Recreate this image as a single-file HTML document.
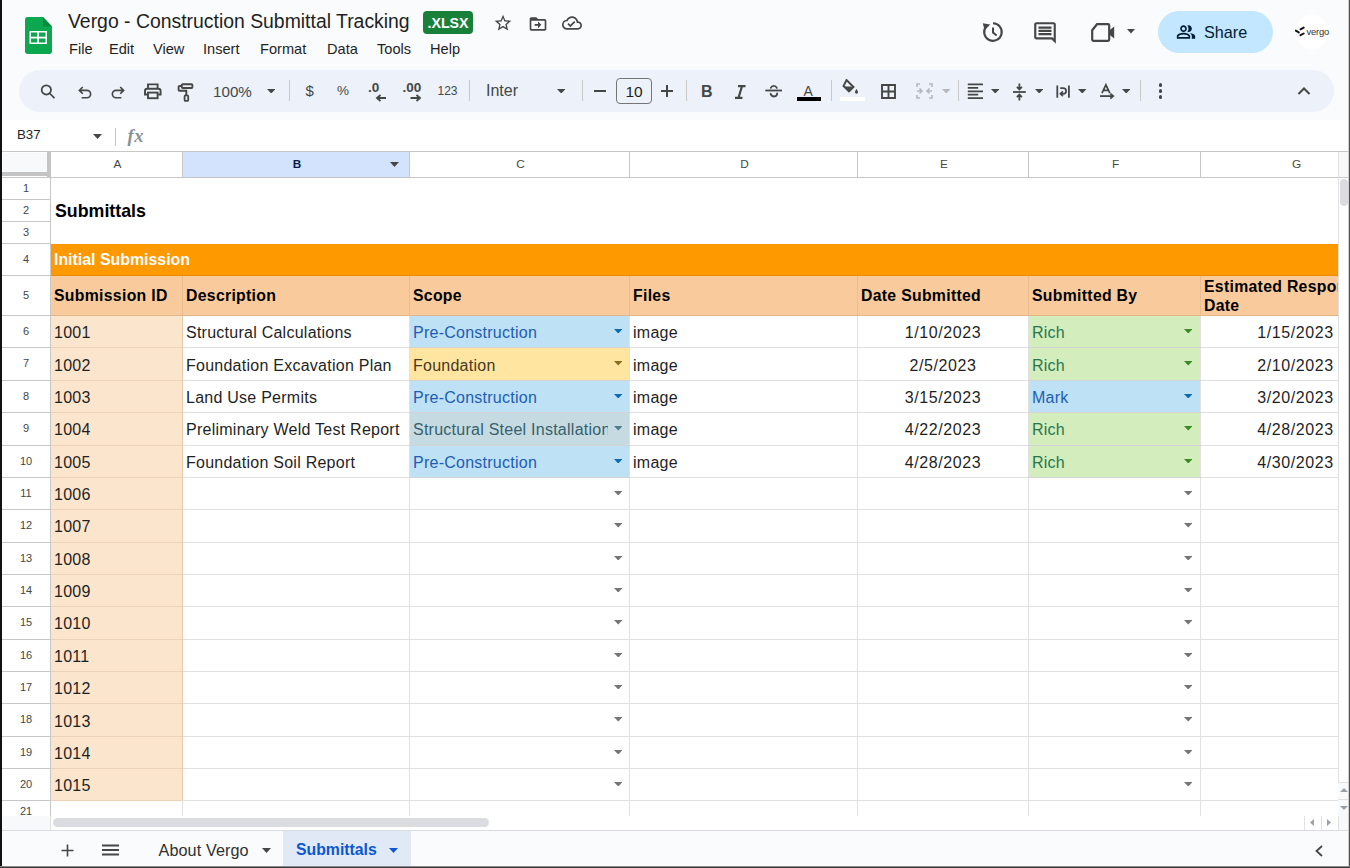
<!DOCTYPE html><html><head><meta charset="utf-8"><style>
html,body{margin:0;padding:0;} body{width:1350px;height:868px;position:relative;overflow:hidden;background:#f9fbfd;font-family:"Liberation Sans", sans-serif;}
div{box-sizing:border-box;}
</style></head><body>
<svg style="position:absolute;left:25px;top:17px" width="27" height="37" viewBox="0 0 27 37"><path d="M2.5 0H18L27 9.5V34.5C27 35.9 25.9 37 24.5 37H2.5C1.1 37 0 35.9 0 34.5V2.5C0 1.1 1.1 0 2.5 0Z" fill="#0ba84f"/>
<path d="M18 0L27 9.5H18Z" fill="#0a8a3c"/>
<rect x="4.5" y="14" width="17.5" height="13" fill="#fff"/>
<rect x="6" y="15.5" width="6.3" height="4.2" fill="#0ba84f"/><rect x="14" y="15.5" width="6.5" height="4.2" fill="#0ba84f"/>
<rect x="6" y="21.5" width="6.3" height="4" fill="#0ba84f"/><rect x="14" y="21.5" width="6.5" height="4" fill="#0ba84f"/></svg>
<div style="position:absolute;left:68px;top:12px;font-size:19.4px;line-height:19.4px;color:#1f1f1f;font-weight:400;white-space:nowrap;">Vergo - Construction Submittal Tracking</div>
<div style="position:absolute;left:423px;top:11px;width:50px;height:23px;background:#188038;border-radius:4px;"></div>
<div style="position:absolute;left:425px;top:15.5px;font-size:14.2px;line-height:14.2px;color:#ffffff;font-weight:700;white-space:nowrap;width:46px;text-align:center;">.XLSX</div>
<svg style="position:absolute;left:493px;top:13px" width="20" height="20" viewBox="0 0 24 24"><path d="M22 9.24l-7.19-.62L12 2 9.19 8.63 2 9.24l5.46 4.73L5.82 21 12 17.27 18.18 21l-1.63-7.03L22 9.24zM12 15.4l-3.76 2.27 1-4.28-3.32-2.88 4.38-.38L12 6.1l1.71 4.04 4.38.38-3.32 2.88 1 4.28L12 15.4z" fill="#444746"/></svg>
<svg style="position:absolute;left:528px;top:14px" width="20" height="20" viewBox="0 0 24 24"><path d="M20 6h-8l-2-2H4c-1.1 0-2 .9-2 2v12c0 1.1.9 2 2 2h16c1.1 0 2-.9 2-2V8c0-1.1-.9-2-2-2zm0 12H4V8h16v10zM12.01 12H8v2h4.01v3L16 13l-3.99-4v3z" fill="#444746"/></svg>
<svg style="position:absolute;left:561px;top:13px" width="22" height="20" viewBox="0 0 24 24"><path d="M19.35 10.04C18.67 6.59 15.64 4 12 4 9.11 4 6.6 5.64 5.35 8.04 2.34 8.36 0 10.91 0 14c0 3.31 2.69 6 6 6h13c2.76 0 5-2.24 5-5 0-2.64-2.05-4.78-4.65-4.96zM19 18H6c-2.21 0-4-1.79-4-4 0-2.05 1.53-3.76 3.56-3.97l1.07-.11.5-.95C8.08 7.14 9.94 6 12 6c2.62 0 4.88 1.86 5.39 4.43l.3 1.5 1.53.11c1.56.1 2.78 1.41 2.78 2.96 0 1.65-1.35 3-3 3zm-9-3.82l-2.09-2.09L6.5 13.5 10 17l6.01-6.01-1.41-1.41z" fill="#444746"/></svg>
<div style="position:absolute;left:69px;top:41.5px;font-size:14.6px;line-height:14.6px;color:#1f1f1f;font-weight:400;white-space:nowrap;">File</div>
<div style="position:absolute;left:109px;top:41.5px;font-size:14.6px;line-height:14.6px;color:#1f1f1f;font-weight:400;white-space:nowrap;">Edit</div>
<div style="position:absolute;left:153px;top:41.5px;font-size:14.6px;line-height:14.6px;color:#1f1f1f;font-weight:400;white-space:nowrap;">View</div>
<div style="position:absolute;left:203px;top:41.5px;font-size:14.6px;line-height:14.6px;color:#1f1f1f;font-weight:400;white-space:nowrap;">Insert</div>
<div style="position:absolute;left:260px;top:41.5px;font-size:14.6px;line-height:14.6px;color:#1f1f1f;font-weight:400;white-space:nowrap;">Format</div>
<div style="position:absolute;left:327px;top:41.5px;font-size:14.6px;line-height:14.6px;color:#1f1f1f;font-weight:400;white-space:nowrap;">Data</div>
<div style="position:absolute;left:377px;top:41.5px;font-size:14.6px;line-height:14.6px;color:#1f1f1f;font-weight:400;white-space:nowrap;">Tools</div>
<div style="position:absolute;left:430px;top:41.5px;font-size:14.6px;line-height:14.6px;color:#1f1f1f;font-weight:400;white-space:nowrap;">Help</div>
<svg style="position:absolute;left:980.5px;top:20px" width="24" height="24" viewBox="0 0 24 24"><path d="M12 3.2A8.8 8.8 0 1 1 5 6.6" fill="none" stroke="#444746" stroke-width="2.1"/><path d="M1.8 3.2L9.2 4.6L3.6 10.2Z" fill="#444746"/><path d="M12 7.5V12.6L15.6 15.6" fill="none" stroke="#444746" stroke-width="2"/></svg>
<svg style="position:absolute;left:1032px;top:20px" width="26" height="26" viewBox="0 0 24 24"><path d="M21.99 4c0-1.1-.89-2-1.99-2H4c-1.1 0-2 .9-2 2v12c0 1.1.9 2 2 2h14l4 4-.01-18zM20 4v13.17L18.83 16H4V4h16zM6 12h12v2H6zm0-3h12v2H6zm0-3h12v2H6z" fill="#444746"/></svg>
<svg style="position:absolute;left:1091px;top:23px" width="25" height="20" viewBox="0 0 25 20"><path d="M1.2 7.2L6 1.2H17C17.6 1.2 18.2 1.8 18.2 2.4V16.6C18.2 17.2 17.6 17.8 17 17.8H2.4C1.8 17.8 1.2 17.2 1.2 16.6Z" fill="none" stroke="#444746" stroke-width="2.2"/><path d="M18.2 7.5L23.2 3.6V15.4L18.2 11.5Z" fill="#444746"/></svg>
<svg style="position:absolute;left:1126.5px;top:29px" width="8" height="4.5" viewBox="0 0 8 4.5"><path d="M0 0h8L4 4.5z" fill="#444746"/></svg>
<div style="position:absolute;left:1158px;top:11px;width:115px;height:42px;background:#c2e7ff;border-radius:21px;"></div>
<svg style="position:absolute;left:1176px;top:22px" width="20" height="20" viewBox="0 0 24 24"><path d="M16.67 13.13C18.04 14.06 19 15.32 19 17v3h4v-3c0-2.18-3.57-3.47-6.33-3.87zM15 12c2.21 0 4-1.79 4-4s-1.79-4-4-4c-.47 0-.91.1-1.33.24C14.5 5.27 15 6.58 15 8s-.5 2.73-1.33 3.76c.42.14.86.24 1.33.24zM9 12c2.21 0 4-1.79 4-4s-1.79-4-4-4-4 1.79-4 4 1.79 4 4 4zm0-6c1.1 0 2 .9 2 2s-.9 2-2 2-2-.9-2-2 .9-2 2-2zM9 13c-2.67 0-8 1.34-8 4v3h16v-3c0-2.66-5.33-4-8-4zm6 5H3v-.99C3.2 16.29 6.3 15 9 15s5.8 1.29 6 2v1z" fill="#001d35"/></svg>
<div style="position:absolute;left:1204px;top:24px;font-size:16.2px;line-height:16.2px;color:#001d35;font-weight:400;white-space:nowrap;">Share</div>
<div style="position:absolute;left:1295px;top:15px;width:34px;height:34px;background:#ffffff;border-radius:50%;"></div>
<svg style="position:absolute;left:1295px;top:26px" width="10" height="12" viewBox="0 0 10 12"><path d="M0.8 4.6L3.8 6.4M5.5 3.3L8.7 1.6M5.5 9.2L8.7 7.5" stroke="#111" stroke-width="1.9" stroke-linecap="round"/></svg>
<div style="position:absolute;left:1306.5px;top:26.5px;font-size:9.4px;line-height:9.4px;color:#333;font-weight:400;white-space:nowrap;letter-spacing:-0.2px;">vergo</div>
<div style="position:absolute;left:19px;top:70px;width:1315px;height:42px;background:#edf2fa;border-radius:21px;"></div>
<svg style="position:absolute;left:38.0px;top:81.6px" width="20" height="20" viewBox="0 0 24 24"><circle cx="10" cy="9.5" r="5.6" fill="none" stroke="#444746" stroke-width="2.1"/><path d="M14.2 13.8L19.8 19.4" stroke="#444746" stroke-width="2.1"/></svg>
<svg style="position:absolute;left:75.5px;top:84.0px" width="18" height="18" viewBox="0 0 24 24"><path d="M9 4L4.5 8.5L9 13M4.5 8.5H14.5C17.3 8.5 19.5 10.7 19.5 13.3S17.3 18.3 14.5 18.3H7.5" fill="none" stroke="#444746" stroke-width="2.2"/></svg>
<svg style="position:absolute;left:109.0px;top:84.2px" width="18" height="18" viewBox="0 0 24 24"><path d="M15 4L19.5 8.5L15 13M19.5 8.5H9.5C6.7 8.5 4.5 10.7 4.5 13.3S6.7 18.3 9.5 18.3H16.5" fill="none" stroke="#444746" stroke-width="2.2"/></svg>
<svg style="position:absolute;left:138px;top:79px" width="60" height="24" viewBox="0 0 60 24"><path d="M10 9.2V5.4H19.6V9.2" fill="none" stroke="#444746" stroke-width="1.9"/><path d="M9.5 15.5H7V12C7 10.6 8 9.8 9.2 9.8H20.3C21.6 9.8 22.6 10.6 22.6 12V15.5H20.3" fill="none" stroke="#444746" stroke-width="1.9"/><rect x="10" y="13.6" width="9.6" height="5.6" fill="none" stroke="#444746" stroke-width="1.9"/><rect x="43.8" y="5.2" width="10.6" height="3.8" rx="1" fill="none" stroke="#444746" stroke-width="1.9"/><path d="M43.6 7H41.6C41 7 40.6 7.4 40.6 8V10.8C40.6 11.4 41 11.8 41.6 11.8H48.3V16" fill="none" stroke="#444746" stroke-width="1.9"/><rect x="46.6" y="16.3" width="3.6" height="5.6" rx="1" fill="none" stroke="#444746" stroke-width="1.8"/></svg>
<div style="position:absolute;left:213px;top:84px;font-size:15.2px;line-height:15.2px;color:#444746;font-weight:400;white-space:nowrap;">100%</div>
<svg style="position:absolute;left:266.75px;top:88.75px" width="8.5" height="4.5" viewBox="0 0 8.5 4.5"><path d="M0 0H8.5L4.25 4.5Z" fill="#444746"/></svg>
<div style="position:absolute;left:289px;top:80px;width:1px;height:21px;background:#c7c7c7;"></div>
<div style="position:absolute;left:305.5px;top:83px;font-size:15px;line-height:15px;color:#444746;font-weight:400;white-space:nowrap;">$</div>
<div style="position:absolute;left:337px;top:83.5px;font-size:13.5px;line-height:13.5px;color:#444746;font-weight:400;white-space:nowrap;">%</div>
<div style="position:absolute;left:368px;top:81px;font-size:13.5px;line-height:13.5px;color:#444746;font-weight:400;white-space:nowrap;"><b>.0</b></div>
<svg style="position:absolute;left:375px;top:94px" width="12" height="8" viewBox="0 0 12 8"><path d="M11 4H2.5M5.5 1L2 4L5.5 7" fill="none" stroke="#444746" stroke-width="1.8"/></svg>
<div style="position:absolute;left:402.5px;top:81px;font-size:13.5px;line-height:13.5px;color:#444746;font-weight:400;white-space:nowrap;"><b>.00</b></div>
<svg style="position:absolute;left:410px;top:94px" width="12" height="8" viewBox="0 0 12 8"><path d="M0.5 4H9.5M6.5 1L10 4L6.5 7" fill="none" stroke="#444746" stroke-width="1.8"/></svg>
<div style="position:absolute;left:437.5px;top:85px;font-size:12px;line-height:12px;color:#444746;font-weight:400;white-space:nowrap;">123</div>
<div style="position:absolute;left:469px;top:80px;width:1px;height:21px;background:#c7c7c7;"></div>
<div style="position:absolute;left:486px;top:83px;font-size:16px;line-height:16px;color:#444746;font-weight:400;white-space:nowrap;">Inter</div>
<svg style="position:absolute;left:556.75px;top:88.75px" width="8.5" height="4.5" viewBox="0 0 8.5 4.5"><path d="M0 0H8.5L4.25 4.5Z" fill="#444746"/></svg>
<div style="position:absolute;left:582px;top:80px;width:1px;height:21px;background:#c7c7c7;"></div>
<div style="position:absolute;left:594px;top:90px;width:12px;height:2px;background:#444746;"></div>
<div style="position:absolute;left:616px;top:78px;width:36px;height:26px;border:1px solid #747775;border-radius:4px;"></div>
<div style="position:absolute;left:616px;top:84px;font-size:15.5px;line-height:15.5px;color:#1f1f1f;font-weight:400;white-space:nowrap;width:36px;text-align:center;">10</div>
<div style="position:absolute;left:661px;top:90px;width:12px;height:2px;background:#444746;"></div>
<div style="position:absolute;left:666px;top:85px;width:2px;height:12px;background:#444746;"></div>
<div style="position:absolute;left:686px;top:80px;width:1px;height:21px;background:#c7c7c7;"></div>
<div style="position:absolute;left:701px;top:84px;font-size:16px;line-height:16px;color:#444746;font-weight:400;white-space:nowrap;"><b>B</b></div>
<svg style="position:absolute;left:734px;top:85px" width="12" height="14" viewBox="0 0 12 14"><path d="M4 1.2H11.5M1 12.8H8.5M8 1.2L4.5 12.8" fill="none" stroke="#444746" stroke-width="2.2"/></svg>
<svg style="position:absolute;left:765px;top:82px" width="18" height="16" viewBox="0 0 18 16"><path d="M0.3 8.5H17" stroke="#444746" stroke-width="1.8"/><path d="M5.8 5.9C6.4 4.6 7.4 3.9 8.8 3.9C10.2 3.9 11.2 4.6 11.8 5.9M5.6 11.8C6.3 13.4 7.4 14.5 9 14.5C10.8 14.5 12.2 13.2 12.2 11.3" fill="none" stroke="#444746" stroke-width="1.8" stroke-linecap="round"/></svg>
<div style="position:absolute;left:803.5px;top:83.5px;font-size:14px;line-height:14px;color:#444746;font-weight:400;white-space:nowrap;">A</div>
<div style="position:absolute;left:797px;top:97px;width:24px;height:4px;background:#000000;"></div>
<div style="position:absolute;left:831px;top:80px;width:1px;height:21px;background:#c7c7c7;"></div>
<svg style="position:absolute;left:842px;top:79px" width="18" height="16" viewBox="0 0 18 16"><path d="M4.5 1L11.5 8L7 12.5L1.5 7Z" fill="none" stroke="#444746" stroke-width="1.9"/><path d="M2.5 7.5H11L7 11.8Z" fill="#444746"/><path d="M14.5 10C14.5 10 13 12 13 13S13.7 14.7 14.5 14.7 16 14 16 13 14.5 10 14.5 10Z" fill="#444746"/></svg>
<div style="position:absolute;left:840px;top:97px;width:25px;height:4px;background:#ffffff;"></div>
<svg style="position:absolute;left:881px;top:84px" width="15" height="15" viewBox="0 0 15 15"><path d="M1 1H14V14H1Z M7.5 1V14 M1 7.5H14" fill="none" stroke="#444746" stroke-width="1.9"/></svg>
<svg style="position:absolute;left:916px;top:83px" width="17" height="16" viewBox="0 0 17 16"><path d="M1 4V1H4M13 1H16V4M1 12V15H4M13 15H16V12M1 8H6M3.5 5.5L6 8L3.5 10.5M16 8H11M13.5 5.5L11 8L13.5 10.5" fill="none" stroke="#b5b8bd" stroke-width="1.6"/></svg>
<svg style="position:absolute;left:941.75px;top:88.75px" width="8.5" height="4.5" viewBox="0 0 8.5 4.5"><path d="M0 0H8.5L4.25 4.5Z" fill="#b5b8bd"/></svg>
<div style="position:absolute;left:958px;top:80px;width:1px;height:21px;background:#c7c7c7;"></div>
<svg style="position:absolute;left:960px;top:78px" width="70" height="26" viewBox="0 0 70 26"><path d="M7.8 6.4H23M7.8 9.8H18.2M7.8 13.3H23M7.8 16.7H18.2M7.8 20.1H23" stroke="#444746" stroke-width="1.7"/><path d="M53 14H65.8" stroke="#444746" stroke-width="1.8"/><path d="M59.4 5.4V11.3M56.9 8.9L59.4 11.4L61.9 8.9M59.4 22.6V16.7M56.9 19.1L59.4 16.6L61.9 19.1" fill="none" stroke="#444746" stroke-width="1.8"/></svg>
<svg style="position:absolute;left:990.75px;top:88.75px" width="8.5" height="4.5" viewBox="0 0 8.5 4.5"><path d="M0 0H8.5L4.25 4.5Z" fill="#444746"/></svg>
<svg style="position:absolute;left:1034.75px;top:88.75px" width="8.5" height="4.5" viewBox="0 0 8.5 4.5"><path d="M0 0H8.5L4.25 4.5Z" fill="#444746"/></svg>
<svg style="position:absolute;left:1050px;top:78px" width="70" height="26" viewBox="0 0 70 26"><path d="M7.3 7.6V19.8M18.9 7.6V19.8" stroke="#444746" stroke-width="1.8"/><path d="M10.2 10.2H13.2C15 10.2 16.1 11.5 16.1 12.9S15 15.8 13.2 15.8H10.8" fill="none" stroke="#444746" stroke-width="1.7"/><path d="M12.9 13.4L10.4 15.8L12.9 18.2" fill="none" stroke="#444746" stroke-width="1.7"/><path d="M52 15.2L55.9 6.8L59.8 15.2M53.3 12.4H58.5" fill="none" stroke="#444746" stroke-width="1.7"/><path d="M50 18.1H62.5" stroke="#444746" stroke-width="1.8"/><path d="M60.3 15.6L63.2 18.1L60.3 20.6" fill="none" stroke="#444746" stroke-width="1.8"/></svg>
<svg style="position:absolute;left:1078.25px;top:88.75px" width="8.5" height="4.5" viewBox="0 0 8.5 4.5"><path d="M0 0H8.5L4.25 4.5Z" fill="#444746"/></svg>
<svg style="position:absolute;left:1121.75px;top:88.75px" width="8.5" height="4.5" viewBox="0 0 8.5 4.5"><path d="M0 0H8.5L4.25 4.5Z" fill="#444746"/></svg>
<div style="position:absolute;left:1140px;top:80px;width:1px;height:21px;background:#c7c7c7;"></div>
<div style="position:absolute;left:1158.7px;top:83.2px;width:3.6px;height:3.6px;background:#444746;border-radius:50%;"></div>
<div style="position:absolute;left:1158.7px;top:89.2px;width:3.6px;height:3.6px;background:#444746;border-radius:50%;"></div>
<div style="position:absolute;left:1158.7px;top:95.2px;width:3.6px;height:3.6px;background:#444746;border-radius:50%;"></div>
<svg style="position:absolute;left:1297px;top:86px" width="14" height="9" viewBox="0 0 14 9"><path d="M1.5 8L7 2.5L12.5 8" fill="none" stroke="#444746" stroke-width="2"/></svg>
<div style="position:absolute;left:2px;top:120px;width:1346px;height:32px;background:#ffffff;"></div>
<div style="position:absolute;left:17px;top:128px;font-size:13.3px;line-height:13.3px;color:#1f1f1f;font-weight:400;white-space:nowrap;">B37</div>
<svg style="position:absolute;left:93.0px;top:133.5px" width="9" height="5" viewBox="0 0 9 5"><path d="M0 0H9L4.5 5Z" fill="#444746"/></svg>
<div style="position:absolute;left:115px;top:128px;width:1px;height:18px;background:#c7c7c7;"></div>
<div style="position:absolute;left:127.5px;top:126.5px;font-size:18.5px;line-height:18.5px;color:#8c9094;font-weight:700;white-space:nowrap;font-family:'Liberation Serif',serif;letter-spacing:0.5px;"><i>fx</i></div>
<div style="position:absolute;left:2px;top:151px;width:1346px;height:1px;background:#c7c7c7;"></div>
<div style="position:absolute;left:0;top:152px;width:1338px;height:664px;overflow:hidden;background:#fff;">
<div style="position:absolute;left:2px;top:0px;width:48px;height:664px;background:#ffffff;"></div>
<div style="position:absolute;left:50px;top:0px;width:1340px;height:25px;background:#ffffff;"></div>
<div style="position:absolute;left:183px;top:0px;width:226px;height:25px;background:#d3e3fd;"></div>
<div style="position:absolute;left:51px;top:92px;width:1339px;height:31px;background:#ff9900;"></div>
<div style="position:absolute;left:51px;top:124px;width:1339px;height:39px;background:#f9cb9c;"></div>
<div style="position:absolute;left:51px;top:164px;width:131px;height:484px;background:#fce5cd;"></div>
<div style="position:absolute;left:410px;top:164px;width:219px;height:31px;background:#bfe1f6;"></div>
<div style="position:absolute;left:1029px;top:164px;width:171px;height:31px;background:#d4edbc;"></div>
<div style="position:absolute;left:410px;top:196px;width:219px;height:32px;background:#ffe5a0;"></div>
<div style="position:absolute;left:1029px;top:196px;width:171px;height:32px;background:#d4edbc;"></div>
<div style="position:absolute;left:410px;top:229px;width:219px;height:31px;background:#bfe1f6;"></div>
<div style="position:absolute;left:1029px;top:229px;width:171px;height:31px;background:#bfe1f6;"></div>
<div style="position:absolute;left:410px;top:261px;width:219px;height:32px;background:#c6dbe1;"></div>
<div style="position:absolute;left:1029px;top:261px;width:171px;height:32px;background:#d4edbc;"></div>
<div style="position:absolute;left:410px;top:294px;width:219px;height:31px;background:#bfe1f6;"></div>
<div style="position:absolute;left:1029px;top:294px;width:171px;height:31px;background:#d4edbc;"></div>
<div style="position:absolute;left:51px;top:47px;width:1339px;height:1px;background:#e1e1e1;"></div>
<div style="position:absolute;left:51px;top:69px;width:1339px;height:1px;background:#e1e1e1;"></div>
<div style="position:absolute;left:51px;top:91px;width:1339px;height:1px;background:#e1e1e1;"></div>
<div style="position:absolute;left:51px;top:123px;width:1339px;height:1px;background:#e1e1e1;"></div>
<div style="position:absolute;left:51px;top:163px;width:1339px;height:1px;background:#e1e1e1;"></div>
<div style="position:absolute;left:51px;top:195px;width:1339px;height:1px;background:#e1e1e1;"></div>
<div style="position:absolute;left:51px;top:228px;width:1339px;height:1px;background:#e1e1e1;"></div>
<div style="position:absolute;left:51px;top:260px;width:1339px;height:1px;background:#e1e1e1;"></div>
<div style="position:absolute;left:51px;top:293px;width:1339px;height:1px;background:#e1e1e1;"></div>
<div style="position:absolute;left:51px;top:325px;width:1339px;height:1px;background:#e1e1e1;"></div>
<div style="position:absolute;left:51px;top:357px;width:1339px;height:1px;background:#e1e1e1;"></div>
<div style="position:absolute;left:51px;top:390px;width:1339px;height:1px;background:#e1e1e1;"></div>
<div style="position:absolute;left:51px;top:422px;width:1339px;height:1px;background:#e1e1e1;"></div>
<div style="position:absolute;left:51px;top:454px;width:1339px;height:1px;background:#e1e1e1;"></div>
<div style="position:absolute;left:51px;top:487px;width:1339px;height:1px;background:#e1e1e1;"></div>
<div style="position:absolute;left:51px;top:519px;width:1339px;height:1px;background:#e1e1e1;"></div>
<div style="position:absolute;left:51px;top:551px;width:1339px;height:1px;background:#e1e1e1;"></div>
<div style="position:absolute;left:51px;top:584px;width:1339px;height:1px;background:#e1e1e1;"></div>
<div style="position:absolute;left:51px;top:616px;width:1339px;height:1px;background:#e1e1e1;"></div>
<div style="position:absolute;left:51px;top:648px;width:1339px;height:1px;background:#e1e1e1;"></div>
<div style="position:absolute;left:51px;top:681px;width:1339px;height:1px;background:#e1e1e1;"></div>
<div style="position:absolute;left:182px;top:26px;width:1px;height:638px;background:#e1e1e1;"></div>
<div style="position:absolute;left:409px;top:26px;width:1px;height:638px;background:#e1e1e1;"></div>
<div style="position:absolute;left:629px;top:26px;width:1px;height:638px;background:#e1e1e1;"></div>
<div style="position:absolute;left:857px;top:26px;width:1px;height:638px;background:#e1e1e1;"></div>
<div style="position:absolute;left:1028px;top:26px;width:1px;height:638px;background:#e1e1e1;"></div>
<div style="position:absolute;left:1200px;top:26px;width:1px;height:638px;background:#e1e1e1;"></div>
<div style="position:absolute;left:51px;top:92px;width:1339px;height:31px;background:#ff9900;"></div>
<div style="position:absolute;left:51px;top:26px;width:1339px;height:66px;background:#ffffff;"></div>
<div style="position:absolute;left:51px;top:123px;width:1339px;height:1px;background:#ec8c00;"></div>
<div style="position:absolute;left:51px;top:92px;width:1339px;height:1px;background:#f99500;"></div>
<div style="position:absolute;left:182px;top:124px;width:1px;height:39px;background:#e9bd90;"></div>
<div style="position:absolute;left:409px;top:124px;width:1px;height:39px;background:#e9bd90;"></div>
<div style="position:absolute;left:629px;top:124px;width:1px;height:39px;background:#e9bd90;"></div>
<div style="position:absolute;left:857px;top:124px;width:1px;height:39px;background:#e9bd90;"></div>
<div style="position:absolute;left:1028px;top:124px;width:1px;height:39px;background:#e9bd90;"></div>
<div style="position:absolute;left:1200px;top:124px;width:1px;height:39px;background:#e9bd90;"></div>
<div style="position:absolute;left:51px;top:163px;width:1339px;height:1px;background:#e0b68b;"></div>
<div style="position:absolute;left:51px;top:195px;width:131px;height:1px;background:#ecd2b6;"></div>
<div style="position:absolute;left:51px;top:228px;width:131px;height:1px;background:#ecd2b6;"></div>
<div style="position:absolute;left:51px;top:260px;width:131px;height:1px;background:#ecd2b6;"></div>
<div style="position:absolute;left:51px;top:293px;width:131px;height:1px;background:#ecd2b6;"></div>
<div style="position:absolute;left:51px;top:325px;width:131px;height:1px;background:#ecd2b6;"></div>
<div style="position:absolute;left:51px;top:357px;width:131px;height:1px;background:#ecd2b6;"></div>
<div style="position:absolute;left:51px;top:390px;width:131px;height:1px;background:#ecd2b6;"></div>
<div style="position:absolute;left:51px;top:422px;width:131px;height:1px;background:#ecd2b6;"></div>
<div style="position:absolute;left:51px;top:454px;width:131px;height:1px;background:#ecd2b6;"></div>
<div style="position:absolute;left:51px;top:487px;width:131px;height:1px;background:#ecd2b6;"></div>
<div style="position:absolute;left:51px;top:519px;width:131px;height:1px;background:#ecd2b6;"></div>
<div style="position:absolute;left:51px;top:551px;width:131px;height:1px;background:#ecd2b6;"></div>
<div style="position:absolute;left:51px;top:584px;width:131px;height:1px;background:#ecd2b6;"></div>
<div style="position:absolute;left:51px;top:616px;width:131px;height:1px;background:#ecd2b6;"></div>
<div style="position:absolute;left:51px;top:648px;width:131px;height:1px;background:#ecd2b6;"></div>
<div style="position:absolute;left:182px;top:164px;width:1px;height:484px;background:#e6c9aa;"></div>
<div style="position:absolute;left:409px;top:195px;width:221px;height:1px;background:rgba(0,0,0,0.06);"></div>
<div style="position:absolute;left:1028px;top:195px;width:173px;height:1px;background:rgba(0,0,0,0.06);"></div>
<div style="position:absolute;left:409px;top:228px;width:221px;height:1px;background:rgba(0,0,0,0.06);"></div>
<div style="position:absolute;left:1028px;top:228px;width:173px;height:1px;background:rgba(0,0,0,0.06);"></div>
<div style="position:absolute;left:409px;top:260px;width:221px;height:1px;background:rgba(0,0,0,0.06);"></div>
<div style="position:absolute;left:1028px;top:260px;width:173px;height:1px;background:rgba(0,0,0,0.06);"></div>
<div style="position:absolute;left:409px;top:293px;width:221px;height:1px;background:rgba(0,0,0,0.06);"></div>
<div style="position:absolute;left:1028px;top:293px;width:173px;height:1px;background:rgba(0,0,0,0.06);"></div>
<div style="position:absolute;left:409px;top:325px;width:221px;height:1px;background:rgba(0,0,0,0.06);"></div>
<div style="position:absolute;left:1028px;top:325px;width:173px;height:1px;background:rgba(0,0,0,0.06);"></div>
<div style="position:absolute;left:0px;top:25px;width:1390px;height:1px;background:#c7c7c7;"></div>
<div style="position:absolute;left:182px;top:0px;width:1px;height:25px;background:#c7c7c7;"></div>
<div style="position:absolute;left:409px;top:0px;width:1px;height:25px;background:#c7c7c7;"></div>
<div style="position:absolute;left:629px;top:0px;width:1px;height:25px;background:#c7c7c7;"></div>
<div style="position:absolute;left:857px;top:0px;width:1px;height:25px;background:#c7c7c7;"></div>
<div style="position:absolute;left:1028px;top:0px;width:1px;height:25px;background:#c7c7c7;"></div>
<div style="position:absolute;left:1200px;top:0px;width:1px;height:25px;background:#c7c7c7;"></div>
<div style="position:absolute;left:50px;top:0px;width:1px;height:664px;background:#c7c7c7;"></div>
<div style="position:absolute;left:2px;top:47px;width:48px;height:1px;background:#c7c7c7;"></div>
<div style="position:absolute;left:2px;top:69px;width:48px;height:1px;background:#c7c7c7;"></div>
<div style="position:absolute;left:2px;top:91px;width:48px;height:1px;background:#c7c7c7;"></div>
<div style="position:absolute;left:2px;top:123px;width:48px;height:1px;background:#c7c7c7;"></div>
<div style="position:absolute;left:2px;top:163px;width:48px;height:1px;background:#c7c7c7;"></div>
<div style="position:absolute;left:2px;top:195px;width:48px;height:1px;background:#c7c7c7;"></div>
<div style="position:absolute;left:2px;top:228px;width:48px;height:1px;background:#c7c7c7;"></div>
<div style="position:absolute;left:2px;top:260px;width:48px;height:1px;background:#c7c7c7;"></div>
<div style="position:absolute;left:2px;top:293px;width:48px;height:1px;background:#c7c7c7;"></div>
<div style="position:absolute;left:2px;top:325px;width:48px;height:1px;background:#c7c7c7;"></div>
<div style="position:absolute;left:2px;top:357px;width:48px;height:1px;background:#c7c7c7;"></div>
<div style="position:absolute;left:2px;top:390px;width:48px;height:1px;background:#c7c7c7;"></div>
<div style="position:absolute;left:2px;top:422px;width:48px;height:1px;background:#c7c7c7;"></div>
<div style="position:absolute;left:2px;top:454px;width:48px;height:1px;background:#c7c7c7;"></div>
<div style="position:absolute;left:2px;top:487px;width:48px;height:1px;background:#c7c7c7;"></div>
<div style="position:absolute;left:2px;top:519px;width:48px;height:1px;background:#c7c7c7;"></div>
<div style="position:absolute;left:2px;top:551px;width:48px;height:1px;background:#c7c7c7;"></div>
<div style="position:absolute;left:2px;top:584px;width:48px;height:1px;background:#c7c7c7;"></div>
<div style="position:absolute;left:2px;top:616px;width:48px;height:1px;background:#c7c7c7;"></div>
<div style="position:absolute;left:2px;top:648px;width:48px;height:1px;background:#c7c7c7;"></div>
<div style="position:absolute;left:2px;top:681px;width:48px;height:1px;background:#c7c7c7;"></div>
<div style="position:absolute;left:2px;top:0px;width:48px;height:25px;background:#ffffff;"></div>
<div style="position:absolute;left:3px;top:1px;width:44px;height:19px;background:#f8f9fa;"></div>
<div style="position:absolute;left:47px;top:0px;width:4px;height:25px;background:#c4c4c4;"></div>
<div style="position:absolute;left:2px;top:20px;width:49px;height:4px;background:#c4c4c4;"></div>
<div style="position:absolute;left:51.5px;top:7.199999999999989px;font-size:11.8px;line-height:11.8px;color:#444746;font-weight:400;white-space:nowrap;width:132px;text-align:center;">A</div>
<div style="position:absolute;left:183.5px;top:7.199999999999989px;font-size:11.8px;line-height:11.8px;color:#041e49;font-weight:700;white-space:nowrap;width:227px;text-align:center;">B</div>
<div style="position:absolute;left:410.5px;top:7.199999999999989px;font-size:11.8px;line-height:11.8px;color:#444746;font-weight:400;white-space:nowrap;width:220px;text-align:center;">C</div>
<div style="position:absolute;left:630.5px;top:7.199999999999989px;font-size:11.8px;line-height:11.8px;color:#444746;font-weight:400;white-space:nowrap;width:228px;text-align:center;">D</div>
<div style="position:absolute;left:858.5px;top:7.199999999999989px;font-size:11.8px;line-height:11.8px;color:#444746;font-weight:400;white-space:nowrap;width:171px;text-align:center;">E</div>
<div style="position:absolute;left:1029.5px;top:7.199999999999989px;font-size:11.8px;line-height:11.8px;color:#444746;font-weight:400;white-space:nowrap;width:172px;text-align:center;">F</div>
<div style="position:absolute;left:1201.5px;top:7.199999999999989px;font-size:11.8px;line-height:11.8px;color:#444746;font-weight:400;white-space:nowrap;width:190px;text-align:center;">G</div>
<svg style="position:absolute;left:389.5px;top:9.5px" width="9" height="5" viewBox="0 0 9 5"><path d="M0 0H9L4.5 5Z" fill="#444746"/></svg>
<div style="position:absolute;left:2px;top:30.5px;font-size:11px;line-height:11px;color:#444746;font-weight:400;white-space:nowrap;width:48px;text-align:center;">1</div>
<div style="position:absolute;left:2px;top:52.5px;font-size:11px;line-height:11px;color:#444746;font-weight:400;white-space:nowrap;width:48px;text-align:center;">2</div>
<div style="position:absolute;left:2px;top:74.5px;font-size:11px;line-height:11px;color:#444746;font-weight:400;white-space:nowrap;width:48px;text-align:center;">3</div>
<div style="position:absolute;left:2px;top:101.5px;font-size:11px;line-height:11px;color:#444746;font-weight:400;white-space:nowrap;width:48px;text-align:center;">4</div>
<div style="position:absolute;left:2px;top:137.5px;font-size:11px;line-height:11px;color:#444746;font-weight:400;white-space:nowrap;width:48px;text-align:center;">5</div>
<div style="position:absolute;left:2px;top:173.5px;font-size:11px;line-height:11px;color:#444746;font-weight:400;white-space:nowrap;width:48px;text-align:center;">6</div>
<div style="position:absolute;left:2px;top:206.0px;font-size:11px;line-height:11px;color:#444746;font-weight:400;white-space:nowrap;width:48px;text-align:center;">7</div>
<div style="position:absolute;left:2px;top:238.5px;font-size:11px;line-height:11px;color:#444746;font-weight:400;white-space:nowrap;width:48px;text-align:center;">8</div>
<div style="position:absolute;left:2px;top:271.0px;font-size:11px;line-height:11px;color:#444746;font-weight:400;white-space:nowrap;width:48px;text-align:center;">9</div>
<div style="position:absolute;left:2px;top:303.5px;font-size:11px;line-height:11px;color:#444746;font-weight:400;white-space:nowrap;width:48px;text-align:center;">10</div>
<div style="position:absolute;left:2px;top:335.5px;font-size:11px;line-height:11px;color:#444746;font-weight:400;white-space:nowrap;width:48px;text-align:center;">11</div>
<div style="position:absolute;left:2px;top:368.0px;font-size:11px;line-height:11px;color:#444746;font-weight:400;white-space:nowrap;width:48px;text-align:center;">12</div>
<div style="position:absolute;left:2px;top:400.5px;font-size:11px;line-height:11px;color:#444746;font-weight:400;white-space:nowrap;width:48px;text-align:center;">13</div>
<div style="position:absolute;left:2px;top:432.5px;font-size:11px;line-height:11px;color:#444746;font-weight:400;white-space:nowrap;width:48px;text-align:center;">14</div>
<div style="position:absolute;left:2px;top:465.0px;font-size:11px;line-height:11px;color:#444746;font-weight:400;white-space:nowrap;width:48px;text-align:center;">15</div>
<div style="position:absolute;left:2px;top:497.5px;font-size:11px;line-height:11px;color:#444746;font-weight:400;white-space:nowrap;width:48px;text-align:center;">16</div>
<div style="position:absolute;left:2px;top:529.5px;font-size:11px;line-height:11px;color:#444746;font-weight:400;white-space:nowrap;width:48px;text-align:center;">17</div>
<div style="position:absolute;left:2px;top:562.0px;font-size:11px;line-height:11px;color:#444746;font-weight:400;white-space:nowrap;width:48px;text-align:center;">18</div>
<div style="position:absolute;left:2px;top:594.5px;font-size:11px;line-height:11px;color:#444746;font-weight:400;white-space:nowrap;width:48px;text-align:center;">19</div>
<div style="position:absolute;left:2px;top:626.5px;font-size:11px;line-height:11px;color:#444746;font-weight:400;white-space:nowrap;width:48px;text-align:center;">20</div>
<div style="position:absolute;left:2px;top:654.3px;font-size:11px;line-height:11px;color:#444746;font-weight:400;white-space:nowrap;width:48px;text-align:center;">21</div>
<div style="position:absolute;left:55px;top:50.6823px;font-size:17.8px;line-height:17.8px;color:#000;font-weight:700;white-space:nowrap;">Submittals</div>
<div style="position:absolute;left:54px;top:99.54065px;font-size:15.9px;line-height:15.9px;color:#ffffff;font-weight:700;white-space:nowrap;">Initial Submission</div>
<div style="position:absolute;left:54px;top:136.37529999999998px;font-size:15.8px;line-height:15.8px;color:#000;font-weight:700;white-space:nowrap;width:128px;overflow:hidden;letter-spacing:0.3px;">Submission ID</div>
<div style="position:absolute;left:186px;top:136.37529999999998px;font-size:15.8px;line-height:15.8px;color:#000;font-weight:700;white-space:nowrap;width:223px;overflow:hidden;letter-spacing:0.3px;">Description</div>
<div style="position:absolute;left:413px;top:136.37529999999998px;font-size:15.8px;line-height:15.8px;color:#000;font-weight:700;white-space:nowrap;width:216px;overflow:hidden;letter-spacing:0.3px;">Scope</div>
<div style="position:absolute;left:633px;top:136.37529999999998px;font-size:15.8px;line-height:15.8px;color:#000;font-weight:700;white-space:nowrap;width:224px;overflow:hidden;letter-spacing:0.3px;">Files</div>
<div style="position:absolute;left:861px;top:136.37529999999998px;font-size:15.8px;line-height:15.8px;color:#000;font-weight:700;white-space:nowrap;width:167px;overflow:hidden;letter-spacing:0.3px;">Date Submitted</div>
<div style="position:absolute;left:1032px;top:136.37529999999998px;font-size:15.8px;line-height:15.8px;color:#000;font-weight:700;white-space:nowrap;width:168px;overflow:hidden;letter-spacing:0.3px;">Submitted By</div>
<div style="position:absolute;left:1204px;top:126.62529999999998px;font-size:15.8px;line-height:15.8px;color:#000;font-weight:700;white-space:nowrap;letter-spacing:0.3px;">Estimated Response</div>
<div style="position:absolute;left:1204px;top:145.62529999999998px;font-size:15.8px;line-height:15.8px;color:#000;font-weight:700;white-space:nowrap;letter-spacing:0.3px;">Date</div>
<div style="position:absolute;left:54px;top:173.25600000000003px;font-size:16px;line-height:16px;color:#1f1f1f;font-weight:400;white-space:nowrap;width:128px;overflow:hidden;letter-spacing:0.25px;">1001</div>
<div style="position:absolute;left:186px;top:173.25600000000003px;font-size:16px;line-height:16px;color:#1f1f1f;font-weight:400;white-space:nowrap;width:223px;overflow:hidden;letter-spacing:0.25px;">Structural Calculations</div>
<div style="position:absolute;left:413px;top:173.25600000000003px;font-size:16px;line-height:16px;color:#1d5db3;font-weight:400;white-space:nowrap;width:195px;overflow:hidden;letter-spacing:0.25px;">Pre-Construction</div>
<div style="position:absolute;left:633px;top:173.25600000000003px;font-size:16px;line-height:16px;color:#1f1f1f;font-weight:400;white-space:nowrap;width:224px;overflow:hidden;letter-spacing:0.25px;">image</div>
<div style="position:absolute;left:858px;top:173.25600000000003px;font-size:16px;line-height:16px;color:#1f1f1f;font-weight:400;white-space:nowrap;width:170px;text-align:center;letter-spacing:0.6px;">1/10/2023</div>
<div style="position:absolute;left:1032px;top:173.25600000000003px;font-size:16px;line-height:16px;color:#2a7550;font-weight:400;white-space:nowrap;width:168px;overflow:hidden;letter-spacing:0.25px;">Rich</div>
<div style="position:absolute;left:1201px;top:173.25600000000003px;font-size:16px;line-height:16px;color:#1f1f1f;font-weight:400;white-space:nowrap;width:189px;text-align:center;letter-spacing:0.6px;">1/15/2023</div>
<svg style="position:absolute;left:613.75px;top:176.75px" width="8.5" height="4.5" viewBox="0 0 8.5 4.5"><path d="M0 0H8.5L4.25 4.5Z" fill="#0b6cb0"/></svg>
<svg style="position:absolute;left:1183.75px;top:176.75px" width="8.5" height="4.5" viewBox="0 0 8.5 4.5"><path d="M0 0H8.5L4.25 4.5Z" fill="#3b8a26"/></svg>
<div style="position:absolute;left:54px;top:205.61600000000004px;font-size:16px;line-height:16px;color:#1f1f1f;font-weight:400;white-space:nowrap;width:128px;overflow:hidden;letter-spacing:0.25px;">1002</div>
<div style="position:absolute;left:186px;top:205.61600000000004px;font-size:16px;line-height:16px;color:#1f1f1f;font-weight:400;white-space:nowrap;width:223px;overflow:hidden;letter-spacing:0.25px;">Foundation Excavation Plan</div>
<div style="position:absolute;left:413px;top:205.61600000000004px;font-size:16px;line-height:16px;color:#473822;font-weight:400;white-space:nowrap;width:195px;overflow:hidden;letter-spacing:0.25px;">Foundation</div>
<div style="position:absolute;left:633px;top:205.61600000000004px;font-size:16px;line-height:16px;color:#1f1f1f;font-weight:400;white-space:nowrap;width:224px;overflow:hidden;letter-spacing:0.25px;">image</div>
<div style="position:absolute;left:858px;top:205.61600000000004px;font-size:16px;line-height:16px;color:#1f1f1f;font-weight:400;white-space:nowrap;width:170px;text-align:center;letter-spacing:0.6px;">2/5/2023</div>
<div style="position:absolute;left:1032px;top:205.61600000000004px;font-size:16px;line-height:16px;color:#2a7550;font-weight:400;white-space:nowrap;width:168px;overflow:hidden;letter-spacing:0.25px;">Rich</div>
<div style="position:absolute;left:1201px;top:205.61600000000004px;font-size:16px;line-height:16px;color:#1f1f1f;font-weight:400;white-space:nowrap;width:189px;text-align:center;letter-spacing:0.6px;">2/10/2023</div>
<svg style="position:absolute;left:613.75px;top:209.25px" width="8.5" height="4.5" viewBox="0 0 8.5 4.5"><path d="M0 0H8.5L4.25 4.5Z" fill="#8a6d1f"/></svg>
<svg style="position:absolute;left:1183.75px;top:209.25px" width="8.5" height="4.5" viewBox="0 0 8.5 4.5"><path d="M0 0H8.5L4.25 4.5Z" fill="#3b8a26"/></svg>
<div style="position:absolute;left:54px;top:237.976px;font-size:16px;line-height:16px;color:#1f1f1f;font-weight:400;white-space:nowrap;width:128px;overflow:hidden;letter-spacing:0.25px;">1003</div>
<div style="position:absolute;left:186px;top:237.976px;font-size:16px;line-height:16px;color:#1f1f1f;font-weight:400;white-space:nowrap;width:223px;overflow:hidden;letter-spacing:0.25px;">Land Use Permits</div>
<div style="position:absolute;left:413px;top:237.976px;font-size:16px;line-height:16px;color:#1d5db3;font-weight:400;white-space:nowrap;width:195px;overflow:hidden;letter-spacing:0.25px;">Pre-Construction</div>
<div style="position:absolute;left:633px;top:237.976px;font-size:16px;line-height:16px;color:#1f1f1f;font-weight:400;white-space:nowrap;width:224px;overflow:hidden;letter-spacing:0.25px;">image</div>
<div style="position:absolute;left:858px;top:237.976px;font-size:16px;line-height:16px;color:#1f1f1f;font-weight:400;white-space:nowrap;width:170px;text-align:center;letter-spacing:0.6px;">3/15/2023</div>
<div style="position:absolute;left:1032px;top:237.976px;font-size:16px;line-height:16px;color:#1d5db3;font-weight:400;white-space:nowrap;width:168px;overflow:hidden;letter-spacing:0.25px;">Mark</div>
<div style="position:absolute;left:1201px;top:237.976px;font-size:16px;line-height:16px;color:#1f1f1f;font-weight:400;white-space:nowrap;width:189px;text-align:center;letter-spacing:0.6px;">3/20/2023</div>
<svg style="position:absolute;left:613.75px;top:241.75px" width="8.5" height="4.5" viewBox="0 0 8.5 4.5"><path d="M0 0H8.5L4.25 4.5Z" fill="#0b6cb0"/></svg>
<svg style="position:absolute;left:1183.75px;top:241.75px" width="8.5" height="4.5" viewBox="0 0 8.5 4.5"><path d="M0 0H8.5L4.25 4.5Z" fill="#0b6cb0"/></svg>
<div style="position:absolute;left:54px;top:270.336px;font-size:16px;line-height:16px;color:#1f1f1f;font-weight:400;white-space:nowrap;width:128px;overflow:hidden;letter-spacing:0.25px;">1004</div>
<div style="position:absolute;left:186px;top:270.336px;font-size:16px;line-height:16px;color:#1f1f1f;font-weight:400;white-space:nowrap;width:223px;overflow:hidden;letter-spacing:0.25px;">Preliminary Weld Test Report</div>
<div style="position:absolute;left:413px;top:270.336px;font-size:16px;line-height:16px;color:#35606e;font-weight:400;white-space:nowrap;width:195px;overflow:hidden;letter-spacing:0.25px;">Structural Steel Installation</div>
<div style="position:absolute;left:633px;top:270.336px;font-size:16px;line-height:16px;color:#1f1f1f;font-weight:400;white-space:nowrap;width:224px;overflow:hidden;letter-spacing:0.25px;">image</div>
<div style="position:absolute;left:858px;top:270.336px;font-size:16px;line-height:16px;color:#1f1f1f;font-weight:400;white-space:nowrap;width:170px;text-align:center;letter-spacing:0.6px;">4/22/2023</div>
<div style="position:absolute;left:1032px;top:270.336px;font-size:16px;line-height:16px;color:#2a7550;font-weight:400;white-space:nowrap;width:168px;overflow:hidden;letter-spacing:0.25px;">Rich</div>
<div style="position:absolute;left:1201px;top:270.336px;font-size:16px;line-height:16px;color:#1f1f1f;font-weight:400;white-space:nowrap;width:189px;text-align:center;letter-spacing:0.6px;">4/28/2023</div>
<svg style="position:absolute;left:613.75px;top:274.25px" width="8.5" height="4.5" viewBox="0 0 8.5 4.5"><path d="M0 0H8.5L4.25 4.5Z" fill="#4f7d8c"/></svg>
<svg style="position:absolute;left:1183.75px;top:274.25px" width="8.5" height="4.5" viewBox="0 0 8.5 4.5"><path d="M0 0H8.5L4.25 4.5Z" fill="#3b8a26"/></svg>
<div style="position:absolute;left:54px;top:302.696px;font-size:16px;line-height:16px;color:#1f1f1f;font-weight:400;white-space:nowrap;width:128px;overflow:hidden;letter-spacing:0.25px;">1005</div>
<div style="position:absolute;left:186px;top:302.696px;font-size:16px;line-height:16px;color:#1f1f1f;font-weight:400;white-space:nowrap;width:223px;overflow:hidden;letter-spacing:0.25px;">Foundation Soil Report</div>
<div style="position:absolute;left:413px;top:302.696px;font-size:16px;line-height:16px;color:#1d5db3;font-weight:400;white-space:nowrap;width:195px;overflow:hidden;letter-spacing:0.25px;">Pre-Construction</div>
<div style="position:absolute;left:633px;top:302.696px;font-size:16px;line-height:16px;color:#1f1f1f;font-weight:400;white-space:nowrap;width:224px;overflow:hidden;letter-spacing:0.25px;">image</div>
<div style="position:absolute;left:858px;top:302.696px;font-size:16px;line-height:16px;color:#1f1f1f;font-weight:400;white-space:nowrap;width:170px;text-align:center;letter-spacing:0.6px;">4/28/2023</div>
<div style="position:absolute;left:1032px;top:302.696px;font-size:16px;line-height:16px;color:#2a7550;font-weight:400;white-space:nowrap;width:168px;overflow:hidden;letter-spacing:0.25px;">Rich</div>
<div style="position:absolute;left:1201px;top:302.696px;font-size:16px;line-height:16px;color:#1f1f1f;font-weight:400;white-space:nowrap;width:189px;text-align:center;letter-spacing:0.6px;">4/30/2023</div>
<svg style="position:absolute;left:613.75px;top:306.75px" width="8.5" height="4.5" viewBox="0 0 8.5 4.5"><path d="M0 0H8.5L4.25 4.5Z" fill="#0b6cb0"/></svg>
<svg style="position:absolute;left:1183.75px;top:306.75px" width="8.5" height="4.5" viewBox="0 0 8.5 4.5"><path d="M0 0H8.5L4.25 4.5Z" fill="#3b8a26"/></svg>
<div style="position:absolute;left:54px;top:335.05600000000004px;font-size:16px;line-height:16px;color:#1f1f1f;font-weight:400;white-space:nowrap;width:128px;overflow:hidden;letter-spacing:0.25px;">1006</div>
<svg style="position:absolute;left:613.75px;top:338.75px" width="8.5" height="4.5" viewBox="0 0 8.5 4.5"><path d="M0 0H8.5L4.25 4.5Z" fill="#757575"/></svg>
<svg style="position:absolute;left:1183.75px;top:338.75px" width="8.5" height="4.5" viewBox="0 0 8.5 4.5"><path d="M0 0H8.5L4.25 4.5Z" fill="#757575"/></svg>
<div style="position:absolute;left:54px;top:367.41600000000005px;font-size:16px;line-height:16px;color:#1f1f1f;font-weight:400;white-space:nowrap;width:128px;overflow:hidden;letter-spacing:0.25px;">1007</div>
<svg style="position:absolute;left:613.75px;top:371.25px" width="8.5" height="4.5" viewBox="0 0 8.5 4.5"><path d="M0 0H8.5L4.25 4.5Z" fill="#757575"/></svg>
<svg style="position:absolute;left:1183.75px;top:371.25px" width="8.5" height="4.5" viewBox="0 0 8.5 4.5"><path d="M0 0H8.5L4.25 4.5Z" fill="#757575"/></svg>
<div style="position:absolute;left:54px;top:399.77599999999995px;font-size:16px;line-height:16px;color:#1f1f1f;font-weight:400;white-space:nowrap;width:128px;overflow:hidden;letter-spacing:0.25px;">1008</div>
<svg style="position:absolute;left:613.75px;top:403.75px" width="8.5" height="4.5" viewBox="0 0 8.5 4.5"><path d="M0 0H8.5L4.25 4.5Z" fill="#757575"/></svg>
<svg style="position:absolute;left:1183.75px;top:403.75px" width="8.5" height="4.5" viewBox="0 0 8.5 4.5"><path d="M0 0H8.5L4.25 4.5Z" fill="#757575"/></svg>
<div style="position:absolute;left:54px;top:432.1360000000001px;font-size:16px;line-height:16px;color:#1f1f1f;font-weight:400;white-space:nowrap;width:128px;overflow:hidden;letter-spacing:0.25px;">1009</div>
<svg style="position:absolute;left:613.75px;top:435.75px" width="8.5" height="4.5" viewBox="0 0 8.5 4.5"><path d="M0 0H8.5L4.25 4.5Z" fill="#757575"/></svg>
<svg style="position:absolute;left:1183.75px;top:435.75px" width="8.5" height="4.5" viewBox="0 0 8.5 4.5"><path d="M0 0H8.5L4.25 4.5Z" fill="#757575"/></svg>
<div style="position:absolute;left:54px;top:464.496px;font-size:16px;line-height:16px;color:#1f1f1f;font-weight:400;white-space:nowrap;width:128px;overflow:hidden;letter-spacing:0.25px;">1010</div>
<svg style="position:absolute;left:613.75px;top:468.25px" width="8.5" height="4.5" viewBox="0 0 8.5 4.5"><path d="M0 0H8.5L4.25 4.5Z" fill="#757575"/></svg>
<svg style="position:absolute;left:1183.75px;top:468.25px" width="8.5" height="4.5" viewBox="0 0 8.5 4.5"><path d="M0 0H8.5L4.25 4.5Z" fill="#757575"/></svg>
<div style="position:absolute;left:54px;top:496.8560000000001px;font-size:16px;line-height:16px;color:#1f1f1f;font-weight:400;white-space:nowrap;width:128px;overflow:hidden;letter-spacing:0.25px;">1011</div>
<svg style="position:absolute;left:613.75px;top:500.75px" width="8.5" height="4.5" viewBox="0 0 8.5 4.5"><path d="M0 0H8.5L4.25 4.5Z" fill="#757575"/></svg>
<svg style="position:absolute;left:1183.75px;top:500.75px" width="8.5" height="4.5" viewBox="0 0 8.5 4.5"><path d="M0 0H8.5L4.25 4.5Z" fill="#757575"/></svg>
<div style="position:absolute;left:54px;top:529.216px;font-size:16px;line-height:16px;color:#1f1f1f;font-weight:400;white-space:nowrap;width:128px;overflow:hidden;letter-spacing:0.25px;">1012</div>
<svg style="position:absolute;left:613.75px;top:532.75px" width="8.5" height="4.5" viewBox="0 0 8.5 4.5"><path d="M0 0H8.5L4.25 4.5Z" fill="#757575"/></svg>
<svg style="position:absolute;left:1183.75px;top:532.75px" width="8.5" height="4.5" viewBox="0 0 8.5 4.5"><path d="M0 0H8.5L4.25 4.5Z" fill="#757575"/></svg>
<div style="position:absolute;left:54px;top:561.576px;font-size:16px;line-height:16px;color:#1f1f1f;font-weight:400;white-space:nowrap;width:128px;overflow:hidden;letter-spacing:0.25px;">1013</div>
<svg style="position:absolute;left:613.75px;top:565.25px" width="8.5" height="4.5" viewBox="0 0 8.5 4.5"><path d="M0 0H8.5L4.25 4.5Z" fill="#757575"/></svg>
<svg style="position:absolute;left:1183.75px;top:565.25px" width="8.5" height="4.5" viewBox="0 0 8.5 4.5"><path d="M0 0H8.5L4.25 4.5Z" fill="#757575"/></svg>
<div style="position:absolute;left:54px;top:593.936px;font-size:16px;line-height:16px;color:#1f1f1f;font-weight:400;white-space:nowrap;width:128px;overflow:hidden;letter-spacing:0.25px;">1014</div>
<svg style="position:absolute;left:613.75px;top:597.75px" width="8.5" height="4.5" viewBox="0 0 8.5 4.5"><path d="M0 0H8.5L4.25 4.5Z" fill="#757575"/></svg>
<svg style="position:absolute;left:1183.75px;top:597.75px" width="8.5" height="4.5" viewBox="0 0 8.5 4.5"><path d="M0 0H8.5L4.25 4.5Z" fill="#757575"/></svg>
<div style="position:absolute;left:54px;top:626.2959999999999px;font-size:16px;line-height:16px;color:#1f1f1f;font-weight:400;white-space:nowrap;width:128px;overflow:hidden;letter-spacing:0.25px;">1015</div>
<svg style="position:absolute;left:613.75px;top:629.75px" width="8.5" height="4.5" viewBox="0 0 8.5 4.5"><path d="M0 0H8.5L4.25 4.5Z" fill="#757575"/></svg>
<svg style="position:absolute;left:1183.75px;top:629.75px" width="8.5" height="4.5" viewBox="0 0 8.5 4.5"><path d="M0 0H8.5L4.25 4.5Z" fill="#757575"/></svg>
</div>
<div style="position:absolute;left:1338px;top:152px;width:10px;height:664px;background:#ffffff;"></div>
<div style="position:absolute;left:1338px;top:152px;width:1px;height:664px;background:#e1e1e1;"></div>
<div style="position:absolute;left:1339px;top:152px;width:9px;height:25px;background:#f8f9fa;"></div>
<div style="position:absolute;left:1339px;top:177px;width:9px;height:1px;background:#c7c7c7;"></div>
<div style="position:absolute;left:1340px;top:179px;width:8px;height:27px;background:#dadce0;border-radius:4px;"></div>
<div style="position:absolute;left:1338px;top:782px;width:10px;height:34px;background:#f8f9fa;"></div>
<svg style="position:absolute;left:1340px;top:788px" width="8" height="4" viewBox="0 0 8 4"><path d="M0 4H8L4 0Z" fill="#9aa0a6"/></svg>
<svg style="position:absolute;left:1340px;top:806px" width="8" height="4" viewBox="0 0 8 4"><path d="M0 0H8L4 4Z" fill="#9aa0a6"/></svg>
<div style="position:absolute;left:2px;top:816px;width:1346px;height:14px;background:#ffffff;"></div>
<div style="position:absolute;left:2px;top:816px;width:48px;height:14px;background:#f8f9fa;"></div>
<div style="position:absolute;left:50px;top:816px;width:1px;height:14px;background:#e1e1e1;"></div>
<div style="position:absolute;left:53px;top:817.5px;width:436px;height:9.5px;background:#dadce0;border-radius:5px;"></div>
<div style="position:absolute;left:1304px;top:816px;width:1px;height:14px;background:#e1e1e1;"></div>
<svg style="position:absolute;left:1310px;top:819px" width="4" height="7" viewBox="0 0 4 7"><path d="M4 0V7L0 3.5Z" fill="#9aa0a6"/></svg>
<div style="position:absolute;left:1321px;top:816px;width:1px;height:14px;background:#e1e1e1;"></div>
<svg style="position:absolute;left:1327px;top:819px" width="4" height="7" viewBox="0 0 4 7"><path d="M0 0V7L4 3.5Z" fill="#9aa0a6"/></svg>
<div style="position:absolute;left:1338px;top:816px;width:10px;height:14px;background:#f8f9fa;"></div>
<div style="position:absolute;left:1338px;top:816px;width:1px;height:14px;background:#e1e1e1;"></div>
<div style="position:absolute;left:1338px;top:799px;width:10px;height:1px;background:#e1e1e1;"></div>
<div style="position:absolute;left:1338px;top:782px;width:10px;height:1px;background:#e1e1e1;"></div>
<div style="position:absolute;left:2px;top:830px;width:1346px;height:36px;background:#f9fbfd;"></div>
<div style="position:absolute;left:2px;top:830px;width:1346px;height:1px;background:#dadce0;"></div>
<svg style="position:absolute;left:60px;top:843px" width="15" height="15" viewBox="0 0 15 15"><path d="M7.5 1.5V13.5M1.5 7.5H13.5" stroke="#444746" stroke-width="1.6"/></svg>
<svg style="position:absolute;left:102px;top:843px" width="17" height="14" viewBox="0 0 17 14"><path d="M0 2.5H17M0 7H17M0 11.5H17" stroke="#444746" stroke-width="1.9"/></svg>
<div style="position:absolute;left:158.5px;top:842px;font-size:16.2px;line-height:16.2px;color:#303030;font-weight:400;white-space:nowrap;letter-spacing:0.1px;">About Vergo</div>
<svg style="position:absolute;left:261.5px;top:848px" width="9" height="5" viewBox="0 0 9 5"><path d="M0 0H9L4.5 5Z" fill="#444746"/></svg>
<div style="position:absolute;left:283px;top:831px;width:128px;height:35px;background:#e1e9f7;"></div>
<div style="position:absolute;left:296px;top:842px;font-size:15.8px;line-height:15.8px;color:#0b57d0;font-weight:400;white-space:nowrap;"><b>Submittals</b></div>
<svg style="position:absolute;left:389px;top:848px" width="9" height="5" viewBox="0 0 9 5"><path d="M0 0H9L4.5 5Z" fill="#0b57d0"/></svg>
<svg style="position:absolute;left:1314px;top:845px" width="10" height="12" viewBox="0 0 10 12"><path d="M8 1L2.5 6L8 11" fill="none" stroke="#444746" stroke-width="1.8"/></svg>
<div style="position:absolute;left:0px;top:0px;width:2px;height:868px;background:#111;"></div>
<div style="position:absolute;left:1348px;top:0px;width:1px;height:868px;background:#d0d0d0;"></div>
<div style="position:absolute;left:1349px;top:0px;width:1px;height:868px;background:#505050;"></div>
<div style="position:absolute;left:0px;top:866px;width:1350px;height:1px;background:#8a8a8a;"></div>
<div style="position:absolute;left:0px;top:867px;width:1350px;height:1px;background:#3a3a3a;"></div>
</body></html>
